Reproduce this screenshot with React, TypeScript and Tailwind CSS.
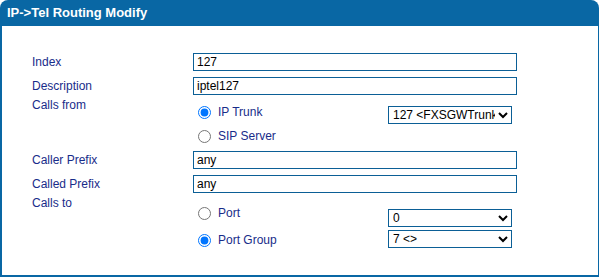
import React from 'react';

const FONT = { fontFamily: '"Liberation Sans", Arial, sans-serif' };

const TextRow: React.FC<{ label: string; value: string; last?: boolean }> = ({ label, value, last }) => (
  <div className={`flex items-center h-[18px] ${last ? 'mb-[3px]' : 'mb-[6px]'}`}>
    <div className="w-[161px] text-[12px] text-[#182c8a]">{label}</div>
    <input
      readOnly
      value={value}
      className="w-[324px] h-[18px] border border-[#0b5f96] px-[3px] text-[12px] text-black bg-white outline-none"
    />
  </div>
);

const Radio: React.FC<{ label: string; checked?: boolean; name: string }> = ({ label, checked, name }) => (
  <label className="flex items-center h-[24px] text-[12px] text-[#182c8a]">
    <input type="radio" name={name} defaultChecked={checked} className="m-0 ml-[5px] mr-[7px] w-[13px] h-[13px]" />
    {label}
  </label>
);

const Select: React.FC<{ value: string; options: string[] }> = ({ value, options }) => (
  <select
    defaultValue={value}
    className="w-[124px] h-[18px] border border-[#0b5f96] text-[12px] text-black bg-white outline-none"
  >
    {options.map((o) => (
      <option key={o}>{o}</option>
    ))}
  </select>
);

const App: React.FC = () => {
  return (
    <div className="w-[600px] h-[277px] bg-white" style={FONT}>
      <div className="w-[599px]">
        <div className="h-[26px] rounded-t-[8px] bg-[#0967a4] pl-[7px] text-[13px] leading-[26px] font-bold text-white">
          IP-&gt;Tel Routing Modify
        </div>
        <div className="h-[251px] border-l-2 border-r border-b-2 border-[#0967a4] pl-[30px] pt-[27px]">
          <TextRow label="Index" value="127" />
          <TextRow label="Description" value="iptel127" last />

          <div className="flex h-[53px]">
            <div className="w-[161px] text-[12px] leading-[14px] text-[#182c8a]">Calls from</div>
            <div className="w-[195px] pt-[2px]">
              <Radio name="from" label="IP Trunk" checked />
              <Radio name="from" label="SIP Server" />
            </div>
            <div className="pt-[4px]">
              <Select value="127 <FXSGWTrunk>" options={['127 <FXSGWTrunk>']} />
            </div>
          </div>

          <TextRow label="Caller Prefix" value="any" />
          <TextRow label="Called Prefix" value="any" last />

          <div className="flex">
            <div className="w-[161px] text-[12px] leading-[14px] text-[#182c8a]">Calls to</div>
            <div className="w-[195px] pt-[5px] flex flex-col gap-[3px]">
              <Radio name="to" label="Port" />
              <Radio name="to" label="Port Group" checked />
            </div>
            <div className="pt-[13px] flex flex-col gap-[3px]">
              <Select value="0" options={['0']} />
              <Select value="7 <>" options={['7 <>']} />
            </div>
          </div>
        </div>
      </div>
    </div>
  );
};

export default App;
